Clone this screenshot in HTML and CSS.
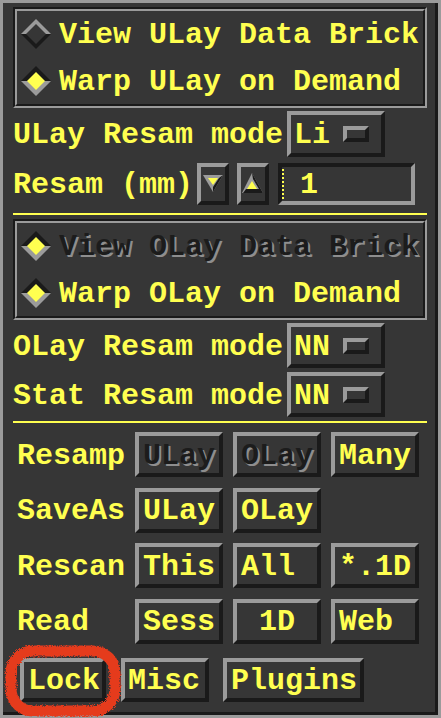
FILE: index.html
```html
<!DOCTYPE html>
<html lang="en">
<head>
    <meta charset="UTF-8">
    <meta name="viewport" content="width=device-width, initial-scale=1.0">
    <title>Underlay / Overlay controls</title>
    <link rel="stylesheet" href="styles.css">
</head>
<body>
    <div class="window">
        <!-- ULay radio box -->
        <div class="frame">
            <div class="frame-in">
                <div class="radio">
                    <svg class="diamond" width="30" height="30" viewBox="0 0 30 30">
                        <polygon points="0,15 15,0 30,15" fill="#9b9b9b"/>
                        <polygon points="0,15 15,30 30,15" fill="#1a1a1a"/>
                        <polygon points="15,5 25,15 15,25 5,15" fill="#363636"/>
                    </svg>
                    <span class="txt">View ULay Data Brick</span>
                </div>
                <div class="radio">
                    <svg class="diamond" width="30" height="30" viewBox="0 0 30 30">
                        <polygon points="0,15 15,0 30,15" fill="#1a1a1a"/>
                        <polygon points="0,15 15,30 30,15" fill="#9b9b9b"/>
                        <polygon points="15,6 24,15 15,24 6,15" fill="#ffff50"/>
                    </svg>
                    <span class="txt">Warp ULay on Demand</span>
                </div>
            </div>
        </div>

        <div class="row row-a">
            <span class="txt">ULay Resam mode</span>
            <div class="opt"><span class="txt">Li</span><span class="ind"></span></div>
        </div>

        <div class="row row-b">
            <span class="txt">Resam (mm)</span>
            <div class="arrow down">
                <svg width="24" height="34" viewBox="0 0 24 34">
                    <polygon points="2,8 22,8 12,25" fill="#9b9b9b"/>
                    <polygon points="22,8 12,25 12,20 18,11" fill="#1a1a1a"/>
                    <polygon points="7,11 17,11 12,18" fill="#ffff50"/>
                </svg>
            </div>
            <div class="arrow up">
                <svg width="24" height="34" viewBox="0 0 24 34">
                    <polygon points="11,6 22,26 1,26" fill="#9b9b9b"/>
                    <polygon points="11,6 22,26 2,26 5,22 18,22 12,12" fill="#1a1a1a"/>
                    <polygon points="11,14 16,22 6,22" fill="#ffff50"/>
                </svg>
            </div>
            <div class="field">
                <span class="cursor"></span>
                <span class="txt">1</span>
            </div>
        </div>

        <div class="sep"></div>

        <!-- OLay radio box -->
        <div class="frame frame-2">
            <div class="frame-in">
                <div class="radio">
                    <svg class="diamond" width="30" height="30" viewBox="0 0 30 30">
                        <polygon points="0,15 15,0 30,15" fill="#1a1a1a"/>
                        <polygon points="0,15 15,30 30,15" fill="#9b9b9b"/>
                        <polygon points="15,6 24,15 15,24 6,15" fill="#ffff50"/>
                    </svg>
                    <span class="txt dis">View OLay Data Brick</span>
                </div>
                <div class="radio">
                    <svg class="diamond" width="30" height="30" viewBox="0 0 30 30">
                        <polygon points="0,15 15,0 30,15" fill="#1a1a1a"/>
                        <polygon points="0,15 15,30 30,15" fill="#9b9b9b"/>
                        <polygon points="15,6 24,15 15,24 6,15" fill="#ffff50"/>
                    </svg>
                    <span class="txt">Warp OLay on Demand</span>
                </div>
            </div>
        </div>

        <div class="row row-c">
            <span class="txt">OLay Resam mode</span>
            <div class="opt short"><span class="txt">NN</span><span class="ind"></span></div>
        </div>
        <div class="row row-d">
            <span class="txt">Stat Resam mode</span>
            <div class="opt short"><span class="txt">NN</span><span class="ind"></span></div>
        </div>

        <div class="sep sep-2"></div>

        <!-- Button grid -->
        <div class="grid">
            <span class="txt lbl">Resamp</span>
            <div class="btn"><span class="txt dis">ULay</span></div>
            <div class="btn"><span class="txt dis">OLay</span></div>
            <div class="btn"><span class="txt">Many</span></div>

            <span class="txt lbl">SaveAs</span>
            <div class="btn"><span class="txt">ULay</span></div>
            <div class="btn"><span class="txt">OLay</span></div>
            <div></div>

            <span class="txt lbl">Rescan</span>
            <div class="btn"><span class="txt">This</span></div>
            <div class="btn"><span class="txt">All</span></div>
            <div class="btn"><span class="txt">*.1D</span></div>

            <span class="txt lbl">Read</span>
            <div class="btn"><span class="txt">Sess</span></div>
            <div class="btn"><span class="txt"> 1D</span></div>
            <div class="btn"><span class="txt">Web</span></div>
        </div>

        <div class="lastrow">
            <div class="btn lock"><span class="txt">Lock</span></div>
            <div class="btn misc"><span class="txt">Misc</span></div>
            <div class="btn plugins"><span class="txt">Plugins</span></div>
        </div>

        <!-- hand drawn red mark round the Lock button -->
        <svg class="mark" width="124" height="80" viewBox="0 0 124 80">
            <defs>
                <filter id="rough" x="-10%" y="-10%" width="120%" height="120%">
                    <feTurbulence type="fractalNoise" baseFrequency="0.9" numOctaves="3" seed="5"/>
                    <feDisplacementMap in="SourceGraphic" scale="5"/>
                </filter>
            </defs>
            <rect x="9" y="10" width="104" height="60" rx="22" ry="22" fill="none" stroke="#e53b1f" stroke-width="11" filter="url(#rough)"/>
        </svg>
    </div>
</body>
</html>
```

FILE: styles.css
```css
body {
    margin: 0;
    background-color: #363636;
    font-family: "Liberation Mono", "DejaVu Sans Mono", monospace;
    font-size: 30px;
    font-weight: bold;
    color: #ffff50;
}
.window {
    position: relative;
    box-sizing: border-box;
    width: 441px;
    height: 718px;
    border: 3px solid #9b9b9b;
    box-shadow: inset -3px -3px 0 #1a1a1a;
    padding: 4px 11px 0 10px;
    background-color: #363636;
}
.txt {
    padding-top: 2px;
    line-height: 34px;
    white-space: pre;
}
.dis {
    color: #1c1c1c;
    text-shadow: 2px 2px 0 #8e8e8e;
}

/* etched radio box */
.frame {
    box-sizing: border-box;
    height: 101px;
    border: 2px solid;
    border-color: #1a1a1a #9b9b9b #9b9b9b #1a1a1a;
}
.frame-in {
    box-sizing: border-box;
    height: 100%;
    border: 2px solid;
    border-color: #9b9b9b #1a1a1a #1a1a1a #9b9b9b;
    padding-left: 4px;
}
.frame-2 {
    margin-top: 4px;
}
.radio {
    display: flex;
    align-items: center;
    gap: 8px;
    height: 46px;
}
.radio + .radio {
    margin-top: 1px;
}
.diamond {
    flex: none;
}

/* rows with label + widget */
.row {
    display: flex;
    align-items: center;
    gap: 4px;
}
.row-a {
    margin-top: 3px;
    height: 46px;
}
.row-b {
    margin-top: 6px;
    height: 42px;
}
.row-c {
    margin-top: 3px;
    height: 45px;
}
.row-d {
    margin-top: 4px;
    height: 45px;
}
.opt {
    box-sizing: border-box;
    width: 98px;
    height: 46px;
    border: 4px solid;
    border-color: #9b9b9b #1a1a1a #1a1a1a #9b9b9b;
    display: flex;
    align-items: center;
    justify-content: space-between;
    padding: 0 12px 0 3px;
}
.opt.short {
    height: 45px;
}
.ind {
    box-sizing: border-box;
    width: 26px;
    height: 16px;
    border: 4px solid;
    border-color: #9b9b9b #1a1a1a #1a1a1a #9b9b9b;
}
.arrow {
    box-sizing: border-box;
    width: 32px;
    height: 42px;
    border: 4px solid;
    border-color: #9b9b9b #1a1a1a #1a1a1a #9b9b9b;
}
.arrow svg {
    display: block;
}
.arrow.up {
    margin-left: 4px;
}
.field {
    box-sizing: border-box;
    width: 137px;
    height: 42px;
    margin-left: 5px;
    border: 4px solid;
    border-color: #1a1a1a #9b9b9b #9b9b9b #1a1a1a;
    display: flex;
    align-items: center;
}
.cursor {
    width: 2px;
    height: 31px;
    margin-right: 16px;
    background: repeating-linear-gradient(to bottom, #ffff50 0 2px, transparent 2px 4px);
}
.sep {
    height: 2px;
    margin-top: 8px;
    background-color: #ffff50;
}
.sep-2 {
    margin-top: 4px;
}

/* button grid */
.grid {
    margin-top: 9px;
    padding-left: 4px;
    display: grid;
    grid-template-columns: 108px 88px 88px 88px;
    grid-auto-rows: 45px;
    column-gap: 10px;
    row-gap: 10.5px;
}
.lbl {
    align-self: center;
}
.btn {
    box-sizing: border-box;
    height: 45px;
    border: 4px solid;
    border-color: #9b9b9b #1a1a1a #1a1a1a #9b9b9b;
    padding: 0 3px 0 4px;
    display: flex;
    align-items: center;
}
.lastrow {
    display: flex;
    margin-top: 14px;
    padding-left: 7px;
}
.lastrow .btn {
    height: 44px;
}
.lock {
    width: 86px;
}
.misc {
    width: 88px;
    margin-left: 15px;
    padding-left: 3px;
}
.plugins {
    width: 141px;
    margin-left: 14px;
}
.mark {
    position: absolute;
    left: -1px;
    top: 638px;
}
```
